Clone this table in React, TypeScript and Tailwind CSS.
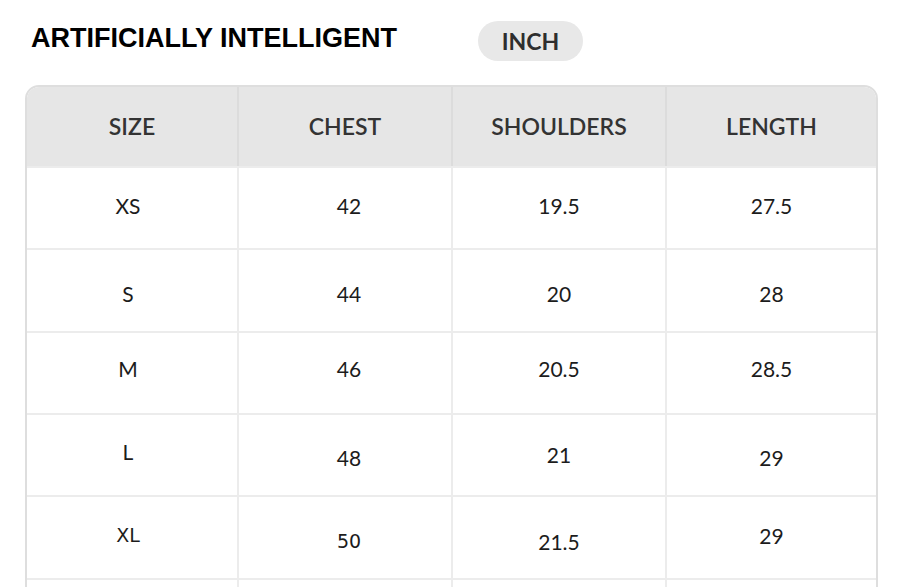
import React from 'react';

type Cell = { v: string; cls: string; font?: 'dejavu' };

// per-cell nudges copy the uneven baselines of the original chart
const rows: { h: string; cells: Cell[] }[] = [
  {
    h: 'h-[82px]',
    cells: [
      { v: 'XS', cls: 'pb-[4px]' },
      { v: '42', cls: 'pb-[4px]' },
      { v: '19.5', cls: 'pb-[4px]' },
      { v: '27.5', cls: 'pb-[4px]' },
    ],
  },
  {
    h: 'h-[83px]',
    cells: [
      { v: 'S', cls: 'pt-[6px]' },
      { v: '44', cls: 'pt-[6px]' },
      { v: '20', cls: 'pt-[6px]' },
      { v: '28', cls: 'pt-[6px]' },
    ],
  },
  {
    h: 'h-[82px]',
    cells: [
      { v: 'M', cls: 'pb-[8px]' },
      { v: '46', cls: 'pb-[8px]' },
      { v: '20.5', cls: 'pb-[8px]' },
      { v: '28.5', cls: 'pb-[8px]' },
    ],
  },
  {
    h: 'h-[82px]',
    cells: [
      { v: 'L', cls: 'pb-[6px]' },
      { v: '48', cls: 'pt-[6px]' },
      { v: '21', cls: '' },
      { v: '29', cls: 'pt-[6px]' },
    ],
  },
  {
    h: 'h-[83px]',
    cells: [
      { v: 'XL', cls: 'pb-[4px]', font: 'dejavu' },
      { v: '50', cls: 'pt-[8px]', font: 'dejavu' },
      { v: '21.5', cls: 'pt-[8px]' },
      { v: '29', cls: 'pb-[4px]' },
    ],
  },
  // next row only peeks in at the bottom edge
  {
    h: 'h-[83px]',
    cells: [
      { v: '', cls: '' },
      { v: '', cls: '' },
      { v: '', cls: '' },
      { v: '', cls: '' },
    ],
  },
];

const heads = ['SIZE', 'CHEST', 'SHOULDERS', 'LENGTH'];
const colShift = ['pr-[8px]', 'pl-[8px]', '', ''];

export default function App() {
  return (
    <div className="w-[900px] h-[587px] overflow-hidden bg-white px-[25px]">
      <div className="flex items-start pt-[21px]">
        <h1 className="mt-[4px] ml-[6px] text-[27px] leading-none font-bold text-black font-['Liberation_Sans',Arial,sans-serif]">
          ARTIFICIALLY INTELLIGENT
        </h1>
        <div className="ml-[81px] flex h-[40px] w-[105px] items-center justify-center rounded-full bg-[#e8e8e8] font-['Lato',sans-serif] text-[23px] font-bold text-[#2e2e2e]">
          INCH
        </div>
      </div>

      <div className="mt-[24px] w-[853px] overflow-hidden rounded-[14px] border-2 border-[#dedede] font-['Lato',sans-serif]">
        <div className="grid h-[79px] grid-cols-[210px_214px_214px_1fr] bg-[#e6e6e6]">
          {heads.map((h, i) => (
            <div
              key={h}
              className={`flex items-center justify-center text-[23px] font-semibold text-[#333] ${i > 0 ? 'border-l-2 border-[#dcdcdc]' : ''}`}
            >
              {h}
            </div>
          ))}
        </div>
        {rows.map((r, ri) => (
          <div key={ri} className={`grid grid-cols-[210px_214px_214px_1fr] border-t-2 border-[#ececec] ${r.h}`}>
            {r.cells.map((c, ci) => (
              <div
                key={ci}
                className={`flex items-center justify-center text-[#1c1c1c] ${c.cls} ${colShift[ci]} ${ci > 0 ? 'border-l-2 border-[#ececec]' : ''} ${
                  c.font === 'dejavu' ? "font-['DejaVu_Sans',sans-serif] text-[19px]" : 'text-[21px]'
                }`}
              >
                {c.v}
              </div>
            ))}
          </div>
        ))}
      </div>
    </div>
  );
}
